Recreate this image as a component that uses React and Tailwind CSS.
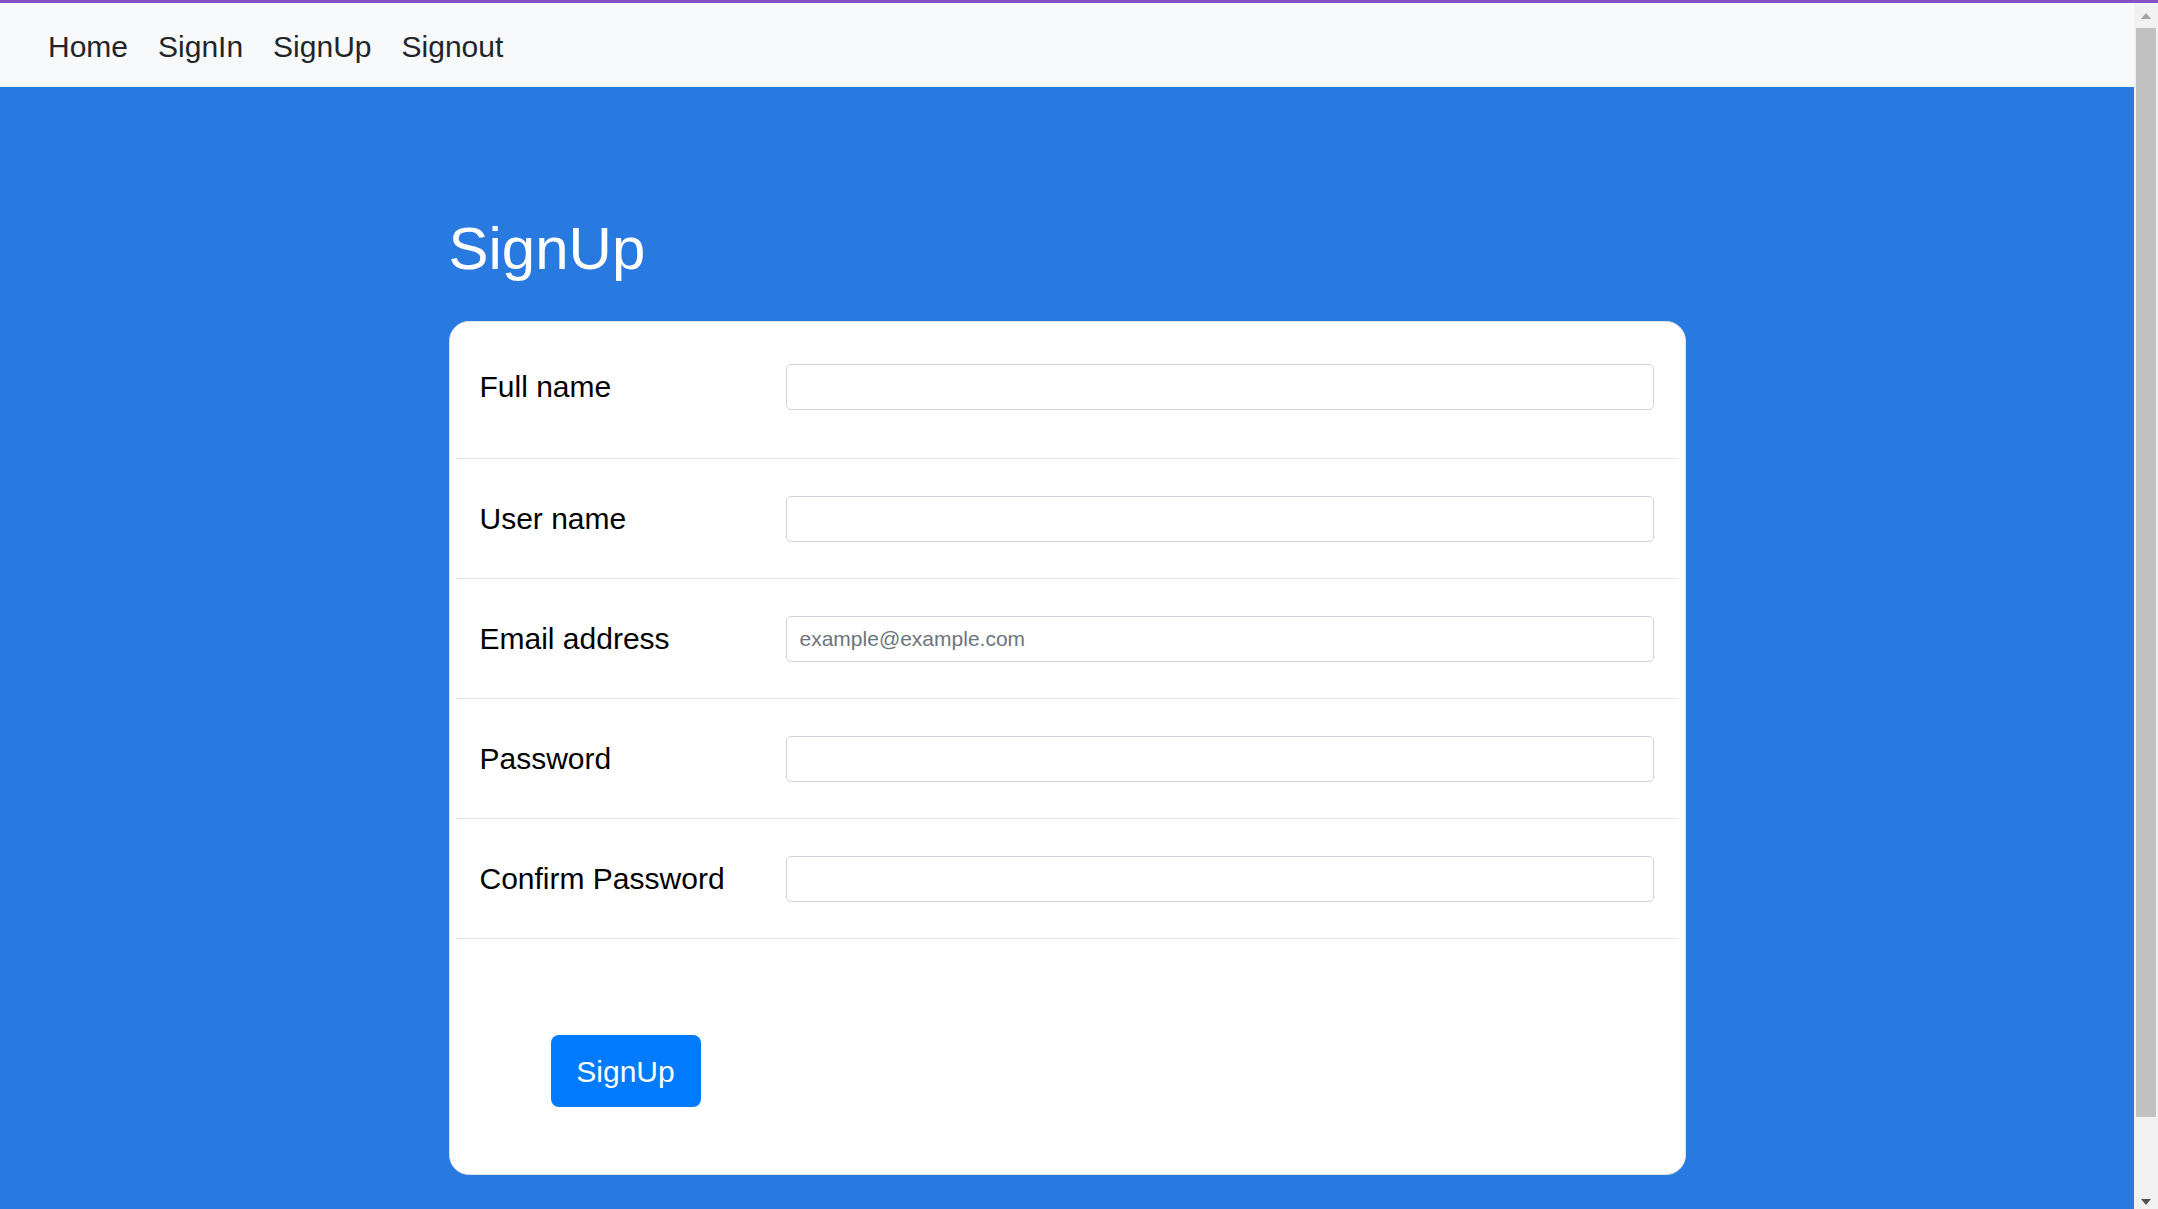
import React from "react";

const NAV_LINKS = ["Home", "SignIn", "SignUp", "Signout"];

const FIELDS = [
  { label: "Full name", type: "text" },
  { label: "User name", type: "text" },
  { label: "Email address", type: "email", placeholder: "example@example.com" },
  { label: "Password", type: "password" },
  { label: "Confirm Password", type: "password" },
];

const FakeScrollbar = () => (
  <div className="flex w-[24px] shrink-0 flex-col bg-[#f1f1f1]">
    <div className="flex h-[25px] items-center justify-center">
      <span className="h-0 w-0 border-x-[5px] border-b-[6px] border-x-transparent border-b-[#a3a3a3]" />
    </div>
    <div className="mx-auto h-[1089px] w-[20px] bg-[#c1c1c1]" />
    <div className="flex flex-1 items-end justify-center pb-[4px]">
      <span className="h-0 w-0 border-x-[5px] border-t-[6px] border-x-transparent border-t-[#505050]" />
    </div>
  </div>
);

const FieldRow = ({ field, first }) => (
  <div className={`mx-[7px] border-b border-[#e3e3e3] ${first ? "pb-[12px] pt-[5px]" : ""}`}>
    <div className="grid h-[119px] grid-cols-[306px_1fr] items-center pl-[23px] pr-[24px]">
      <label className="text-[30px] text-black">{field.label}</label>
      <input
        type={field.type}
        placeholder={field.placeholder}
        className="h-[46px] w-full rounded-[5px] border border-[#ced4da] bg-white px-[13px] text-[21px] text-[#495057] outline-none placeholder:text-[#6c757d]"
      />
    </div>
  </div>
);

export default function App() {
  return (
    <div className="flex h-[1209px] flex-col overflow-hidden font-['Liberation_Sans',Arial,sans-serif]">
      <div className="h-[3px] shrink-0 bg-[#8550c6]" />
      <div className="flex min-h-0 flex-1">
        <div className="flex min-w-0 flex-1 flex-col">
          <nav className="flex h-[84px] shrink-0 items-center bg-[#f8f9fa] pl-[33px] pt-[3px]">
            {NAV_LINKS.map((link) => (
              <a key={link} href="#" className="px-[15px] text-[30px] text-[#212529]">
                {link}
              </a>
            ))}
          </nav>

          <main className="flex-1 bg-[#2879e0] pt-[126px]">
            <div className="mx-auto w-[1237px]">
              <h1 className="mb-[36px] text-[60px] leading-[72px] text-white">SignUp</h1>

              <form className="h-[854px] rounded-[20px] border border-[#dee2e6] bg-white">
                {FIELDS.map((field, i) => (
                  <FieldRow key={field.label} field={field} first={i === 0} />
                ))}
                <div className="pl-[101px] pt-[96px]">
                  <button
                    type="button"
                    className="flex h-[72px] w-[150px] items-center justify-center rounded-[8px] bg-[#007bff] text-[30px] text-white"
                  >
                    SignUp
                  </button>
                </div>
              </form>
            </div>
          </main>
        </div>
        <FakeScrollbar />
      </div>
    </div>
  );
}
